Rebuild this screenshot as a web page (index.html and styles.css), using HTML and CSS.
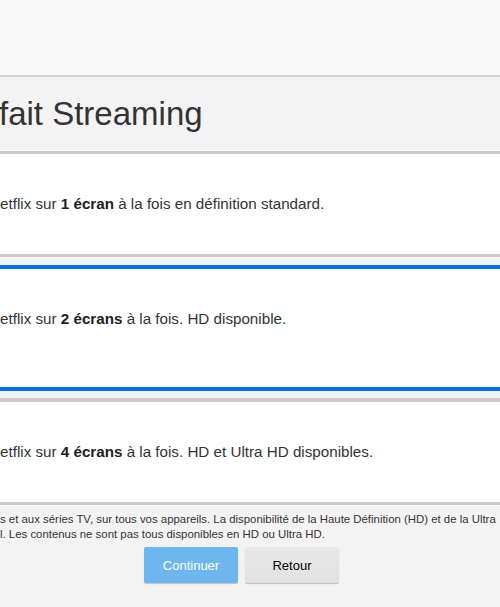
FILE: index.html
```html
<!DOCTYPE html>
<html lang="fr">
<head>
<meta charset="utf-8">
<title>Forfait Streaming</title>
<link rel="stylesheet" href="styles.css">
</head>
<body>
<div class="page">
  <div class="topbar"></div>
  <header class="title-bar">
    <h1 class="title">fait Streaming</h1>
  </header>
  <div class="plans">
    <div class="plan plan-first">
      <p class="plan-text">etflix sur <b>1 écran</b> à la fois en définition standard.</p>
    </div>
    <div class="plan plan-selected">
      <p class="plan-text">etflix sur <b>2 écrans</b> à la fois. HD disponible.</p>
    </div>
    <div class="plan plan-last">
      <p class="plan-text">etflix sur <b>4 écrans</b> à la fois. HD et Ultra HD disponibles.</p>
    </div>
  </div>
  <div class="footer">
    <p class="note">s et aux séries TV, sur tous vos appareils. La disponibilité de la Haute Définition (HD) et de la Ultra</p>
    <p class="note">l. Les contenus ne sont pas tous disponibles en HD ou Ultra HD.</p>
    <div class="actions">
      <button class="btn btn-primary">Continuer</button>
      <button class="btn btn-secondary">Retour</button>
    </div>
  </div>
</div>
</body>
</html>
```

FILE: styles.css
```css
html, body {
  margin: 0;
  padding: 0;
}
body {
  width: 500px;
  height: 607px;
  overflow: hidden;
  background: #f3f3f3;
  font-family: "Liberation Sans", Arial, Helvetica, sans-serif;
  color: #333;
}
.page {
  display: flex;
  flex-direction: column;
  width: 500px;
}
.topbar {
  height: 75px;
  background: #f9f9f9;
  border-bottom: 2px solid #cfcfcf;
}
.title-bar {
  height: 74px;
  background: #f3f3f3;
  display: flex;
  align-items: center;
  border-bottom: 3px solid #cccccc;
}
.title {
  margin: 0 0 0 -1px;
  font-size: 33px;
  font-weight: normal;
  color: #333;
  line-height: 40px;
  white-space: nowrap;
}
.plans {
  display: flex;
  flex-direction: column;
  gap: 8px;
}
.plan {
  background: #fff;
  display: flex;
  align-items: center;
  height: 100px;
}
.plan-first {
  border-bottom: 3px solid #cccccc;
}
.plan-selected {
  border-top: 4px solid #0071eb;
  border-bottom: 4px solid #0071eb;
  height: 118px;
  align-items: flex-start;
}
.plan-selected .plan-text {
  margin-top: 41px;
}
.plan-last {
  margin-top: -1px;
  border-top: 4px solid #cccccc;
  border-bottom: 3px solid #cccccc;
}
.plan-text {
  margin: 0;
  font-size: 15.2px;
  line-height: 18px;
  white-space: nowrap;
  color: #333;
}
.plan-text b {
  font-weight: bold;
  color: #222;
}
.footer {
  padding-top: 7px;
  display: flex;
  flex-direction: column;
}
.note {
  margin: 0;
  font-size: 11.4px;
  line-height: 15px;
  white-space: nowrap;
  color: #333;
}
.actions {
  display: flex;
  gap: 7px;
  padding-left: 144px;
  margin-top: 5px;
}
.btn {
  width: 94px;
  height: 36px;
  border: 0;
  border-radius: 2px;
  font-family: "Liberation Sans", Arial, Helvetica, sans-serif;
  font-size: 13px;
  padding: 0;
  box-shadow: 0 1px 1px rgba(0, 0, 0, 0.22);
}
.btn-primary {
  background: #6db6f0;
  color: #fff;
}
.btn-secondary {
  background: linear-gradient(#e9e9e9, #e1e1e1);
  color: #000;
}
```
